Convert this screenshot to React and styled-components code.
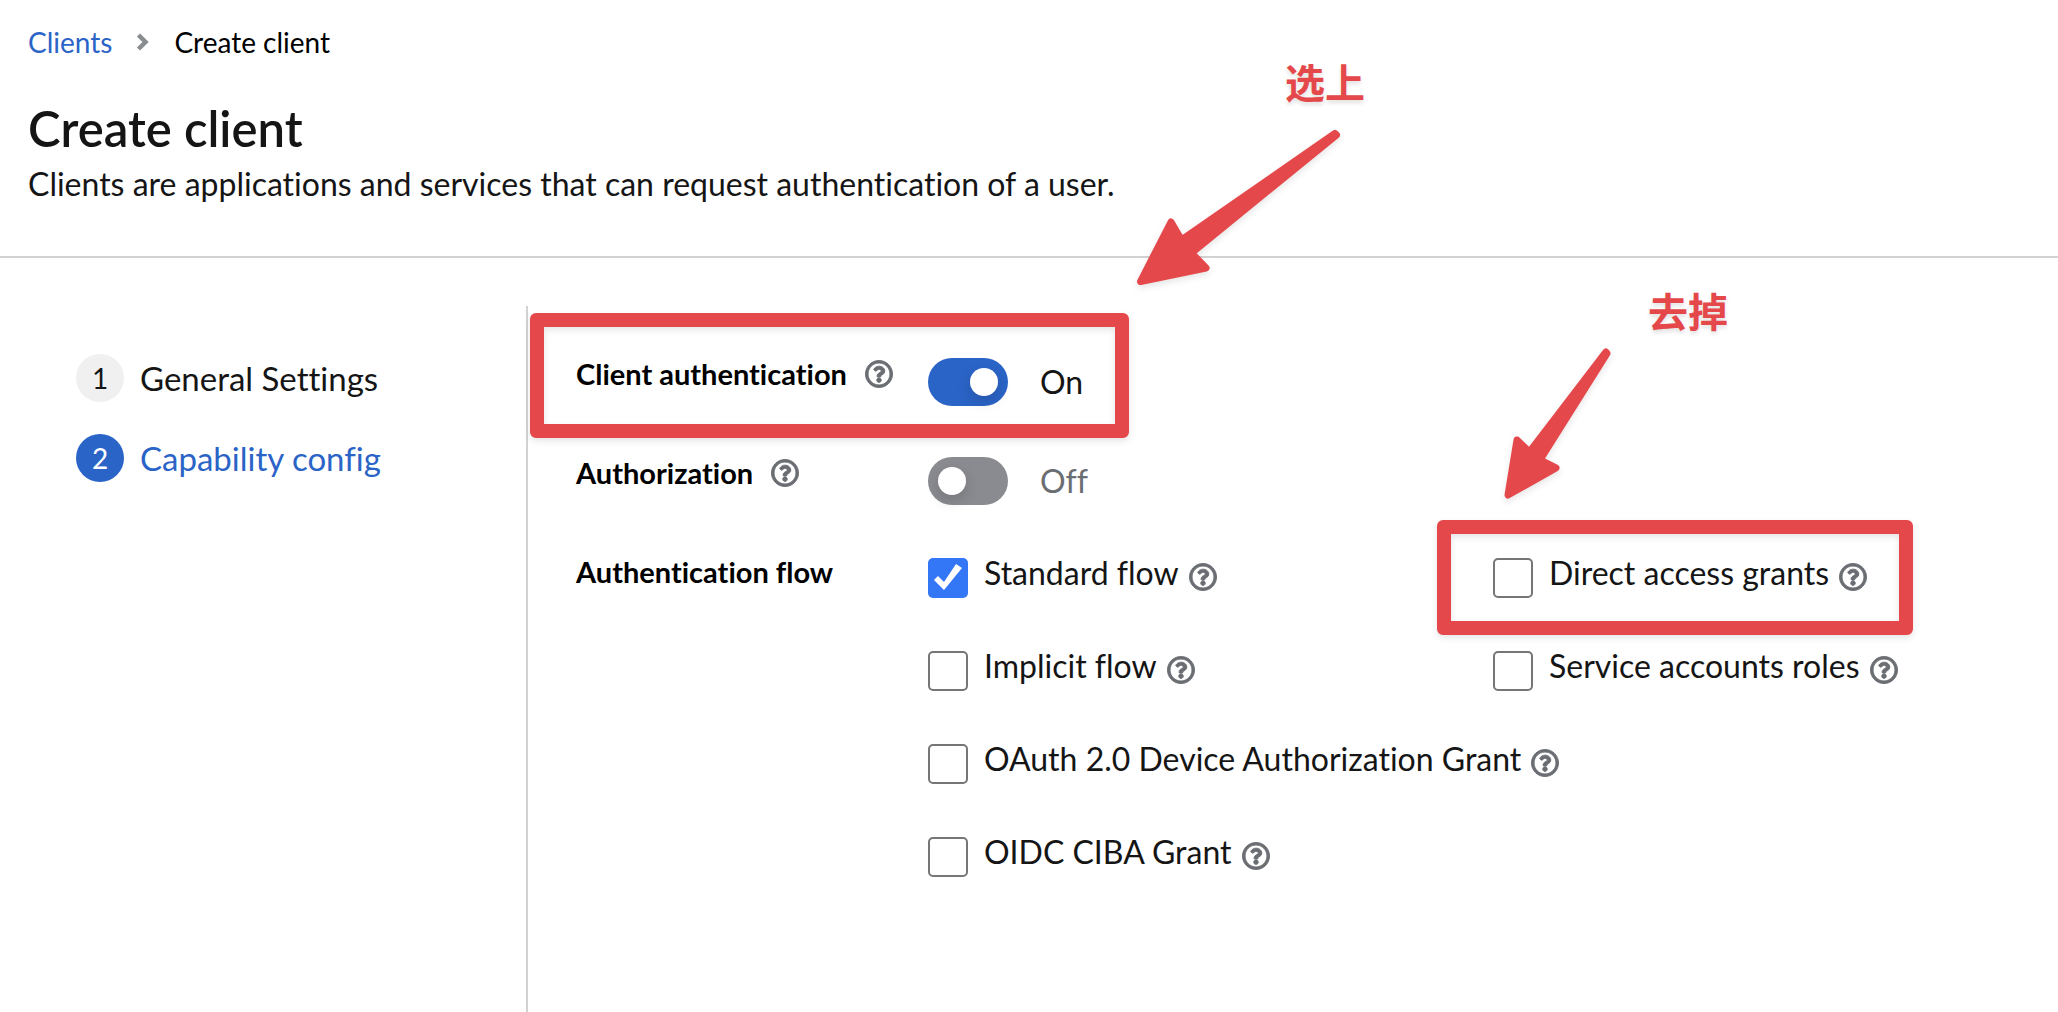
import React from 'react';
import styled, { createGlobalStyle } from 'styled-components';
import { FaRegQuestionCircle } from 'react-icons/fa';

const GlobalStyle = createGlobalStyle`
  *, *::before, *::after { box-sizing: border-box; }
  html, body, #root { height: 100%; }
  body {
    margin: 0;
    background: #fff;
    color: #151515;
    font-family: Lato, "Noto Sans CJK SC", sans-serif;
    font-size: 32px;
    font-variant-ligatures: none;
  }
`;

const Page = styled.div`
  display: flex;
  flex-direction: column;
  min-height: 100%;
  overflow-x: hidden;
`;

const Header = styled.header`
  padding: 20px 28px 48px;
  border-bottom: 2px solid #d2d2d2;
`;

const Breadcrumb = styled.ol`
  display: flex;
  align-items: center;
  gap: 24px;
  margin: 0 0 32px;
  padding: 0;
  list-style: none;
  font-size: 28px;
  line-height: 44px;
  color: #000;
`;

const Crumb = styled.li`
  display: flex;
  align-items: center;
  gap: 24px;
`;

const CrumbLink = styled.a`
  color: #2b64c7;
  text-decoration: none;
`;

const CrumbDivider = styled.svg`
  width: 14px;
  height: 18px;
  fill: none;
  stroke: #8a8d90;
  stroke-width: 4.5px;
`;

const Title = styled.h1`
  margin: 0;
  font-size: 49px;
  font-weight: 600;
  line-height: 64px;
`;

const Subtitle = styled.p`
  margin: 0;
  line-height: 48px;
`;

const Wizard = styled.div`
  display: flex;
  flex: 1;
  padding-top: 48px;
`;

const Steps = styled.ol`
  display: flex;
  flex: 0 0 526px;
  flex-direction: column;
  gap: 32px;
  margin: 0;
  padding: 48px 32px 48px 76px;
  list-style: none;
`;

const StepButton = styled.button`
  display: flex;
  align-items: center;
  gap: 16px;
  padding: 0;
  border: 0;
  background: none;
  color: ${(p) => (p.$current ? '#2b64c7' : '#151515')};
  font: inherit;
  font-size: 33px;
  line-height: 48px;
  cursor: pointer;
`;

const StepNumber = styled.span`
  width: 48px;
  height: 48px;
  border-radius: 50%;
  background: ${(p) => (p.$current ? '#2b64c7' : '#f0f0f0')};
  color: ${(p) => (p.$current ? '#fff' : '#151515')};
  font-size: 28px;
  text-align: center;
`;

const Form = styled.form`
  display: flex;
  flex: 1;
  flex-direction: column;
  gap: 47px;
  min-width: 0;
  padding: 48px;
  border-left: 2px solid #d2d2d2;
`;

const FormRow = styled.div`
  position: relative;
  display: grid;
  grid-template-columns: 352px minmax(0, 1fr);
  align-items: start;
`;

const LabelCell = styled.div`
  display: flex;
  align-items: center;
  gap: 18px;
  color: #000;
  font-size: 29px;
  font-weight: 700;
  line-height: 40px;
`;

const HelpButton = styled.button`
  display: flex;
  padding: 0;
  border: 0;
  background: none;
  color: #6a6e73;
  font-size: 28px;
  cursor: pointer;
`;

const HelpIcon = styled(FaRegQuestionCircle)`
  overflow: visible;
  stroke-width: 16px;
`;

const SwitchControl = styled.label`
  display: flex;
  align-items: center;
  gap: 32px;
  margin-top: 4px;
  line-height: 48px;
`;

const SwitchInput = styled.input`
  appearance: none;
  display: flex;
  align-items: center;
  width: 80px;
  height: 48px;
  margin: 0;
  padding: 0 10px;
  border-radius: 24px;
  background: #8a8b90;

  &::before {
    content: '';
    width: 28px;
    height: 28px;
    border-radius: 50%;
    background: #fff;
    box-shadow: 0 6px 14px rgba(0, 0, 0, 0.15);
  }

  &:checked {
    justify-content: flex-end;
    background: #2b64c7;
  }
`;

const SwitchText = styled.span`
  color: ${(p) => (p.$on ? '#151515' : '#6a6e73')};
`;

const FlowGrid = styled.div`
  display: grid;
  grid-template-columns: repeat(2, minmax(0, 1fr));
  gap: 47px 48px;
`;

const FlowItem = styled.div`
  position: relative;
  display: flex;
  align-items: flex-start;
  grid-column: ${(p) => (p.$wide ? '1 / -1' : 'auto')};
  line-height: 42px;
  white-space: nowrap;

  ${HelpButton} {
    margin: 11px 0 0 10px;
  }
`;

const CheckInput = styled.input`
  appearance: none;
  flex: none;
  width: 40px;
  height: 40px;
  margin: 6px 16px 0 0;
  border: 2px solid #767676;
  border-radius: 5px;
  background: #fff;

  &:checked {
    border: 0;
    background: #3477f6;
  }

  &:checked::before {
    content: '';
    display: block;
    width: 40px;
    height: 40px;
    background: #fff;
    clip-path: polygon(6px 22px, 10px 18px, 16px 24px, 28px 6px, 34px 10px, 16px 32px);
  }
`;

const Highlight = styled.div`
  position: absolute;
  top: ${(p) => p.$top}px;
  left: ${(p) => p.$left}px;
  width: ${(p) => p.$width}px;
  height: ${(p) => p.$height}px;
  border: 14px solid #e5484b;
  border-radius: 6px;
  filter: drop-shadow(0 3px 3px rgba(0, 0, 0, 0.1));
  pointer-events: none;
`;

const Arrow = styled.svg`
  position: absolute;
  top: ${(p) => p.$top}px;
  left: ${(p) => p.$left}px;
  overflow: visible;
  fill: #e5484b;
  stroke: #e5484b;
  stroke-width: 7px;
  stroke-linejoin: round;
  filter: drop-shadow(0 3px 3px rgba(0, 0, 0, 0.1));
  pointer-events: none;
`;

const Note = styled.span`
  position: absolute;
  top: ${(p) => p.$top}px;
  left: ${(p) => p.$left}px;
  color: #e5484b;
  font-family: "Noto Sans CJK SC", sans-serif;
  font-size: 40px;
  font-weight: 700;
  line-height: 48px;
  white-space: nowrap;
  text-shadow: 0 3px 4px rgba(0, 0, 0, 0.12);
  pointer-events: none;
`;

function Help({ topic }) {
  return (
    <HelpButton type="button" aria-label={`More info for ${topic}`}>
      <HelpIcon />
    </HelpButton>
  );
}

function SwitchRow({ id, label, defaultOn, children }) {
  const [on, setOn] = React.useState(defaultOn);
  return (
    <FormRow>
      <LabelCell>
        <label htmlFor={id}>{label}</label>
        <Help topic={label} />
      </LabelCell>
      <SwitchControl>
        <SwitchInput
          id={id}
          type="checkbox"
          role="switch"
          checked={on}
          onChange={(e) => setOn(e.target.checked)}
        />
        <SwitchText $on={on}>{on ? 'On' : 'Off'}</SwitchText>
      </SwitchControl>
      {children}
    </FormRow>
  );
}

function Flow({ id, label, defaultChecked, wide, children }) {
  return (
    <FlowItem $wide={wide}>
      <CheckInput id={id} type="checkbox" defaultChecked={defaultChecked} />
      <label htmlFor={id}>{label}</label>
      <Help topic={label} />
      {children}
    </FlowItem>
  );
}

export default function App() {
  return (
    <Page>
      <GlobalStyle />
      <Header>
        <nav aria-label="Breadcrumb">
          <Breadcrumb>
            <Crumb>
              <CrumbLink href="#clients">Clients</CrumbLink>
            </Crumb>
            <Crumb>
              <CrumbDivider viewBox="0 0 14 18" aria-hidden="true">
                <path d="M2.500 2 L9.500 9 L2.500 16" />
              </CrumbDivider>
              Create client
            </Crumb>
          </Breadcrumb>
        </nav>
        <Title>Create client</Title>
        <Subtitle>
          Clients are applications and services that can request authentication of a user.
        </Subtitle>
      </Header>
      <Wizard>
        <Steps>
          <li>
            <StepButton type="button">
              <StepNumber>1</StepNumber>
              General Settings
            </StepButton>
          </li>
          <li>
            <StepButton type="button" $current aria-current="step">
              <StepNumber $current>2</StepNumber>
              Capability config
            </StepButton>
          </li>
        </Steps>
        <Form>
          <SwitchRow id="client-authentication" label="Client authentication" defaultOn>
            <Highlight $top={-41} $left={-46} $width={599} $height={125} />
            <Arrow $top={-234} $left={554} width="220" height="175" aria-hidden="true">
              <path d="M205 13.500 L206.500 15 L61.500 133 L76 148 L10.500 161.500 L41 102 L51.500 120 Z" />
            </Arrow>
            <Note $top={-297} $left={709}>选上</Note>
          </SwitchRow>
          <SwitchRow id="authorization" label="Authorization" defaultOn={false} />
          <FormRow role="group" aria-labelledby="authentication-flow">
            <LabelCell id="authentication-flow">Authentication flow</LabelCell>
            <FlowGrid>
              <Flow id="standard" label="Standard flow" defaultChecked />
              <Flow id="direct" label="Direct access grants">
                <Highlight $top={-32} $left={-56} $width={476} $height={115} />
                <Arrow $top={-212} $left={7} width="120" height="170" aria-hidden="true">
                  <path d="M106 12 L107 13.500 L40 120 L56 128 L8 155 L17 100 L29.500 112 Z" />
                </Arrow>
                <Note $top={-266} $left={155}>去掉</Note>
              </Flow>
              <Flow id="implicit" label="Implicit flow" />
              <Flow id="service" label="Service accounts roles" />
              <Flow id="device" label="OAuth 2.0 Device Authorization Grant" wide />
              <Flow id="ciba" label="OIDC CIBA Grant" wide />
            </FlowGrid>
          </FormRow>
        </Form>
      </Wizard>
    </Page>
  );
}
